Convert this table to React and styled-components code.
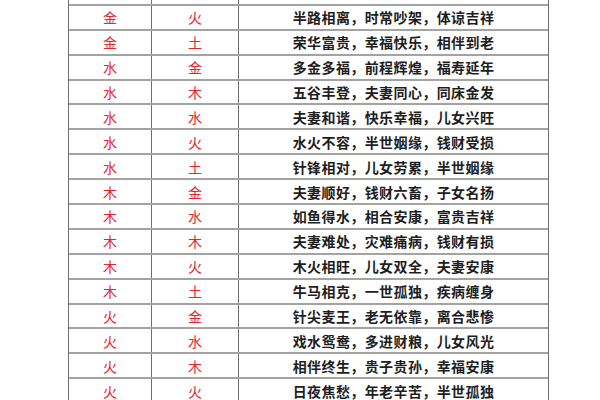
import React from 'react'
import styled, { createGlobalStyle } from 'styled-components'

const GlobalStyle = createGlobalStyle`
    html, body {
        margin: 0;
        padding: 0;
        background: #ffffff;
        overflow: hidden;
    }
`

const Page = styled.div`
    width: 600px;
    height: 400px;
    overflow: hidden;
    padding-left: 68px;
    box-sizing: border-box;
    font-family: "Noto Sans CJK SC", "Noto Sans", sans-serif;
`

const Table = styled.div`
    display: flex;
    flex-direction: column;
    width: 481px;
    margin-top: -19px;
    border-left: 1px solid #6f6f6f;
    border-right: 1px solid #6f6f6f;
    box-sizing: border-box;
`

const Row = styled.div`
    display: grid;
    grid-template-columns: 83px 87px 1fr;
    height: 24.9px;
    box-sizing: border-box;
    border-bottom: 2px solid #a3a3a3;
`

const Cell = styled.div`
    display: flex;
    align-items: center;
    justify-content: center;
    font-size: 14px;
    line-height: 1;
    color: ${props => props.$red ? '#e5262e' : '#1e1e1e'};
    font-weight: ${props => props.$red ? 400 : 600};
    letter-spacing: ${props => props.$red ? '0' : '0.4px'};
    border-right: ${props => props.$last ? 'none' : '1px solid #6f6f6f'};
`

const rows = [
    ['', '', ''],
    ['金', '火', '半路相离，时常吵架，体谅吉祥'],
    ['金', '土', '荣华富贵，幸福快乐，相伴到老'],
    ['水', '金', '多金多福，前程辉煌，福寿延年'],
    ['水', '木', '五谷丰登，夫妻同心，同床金发'],
    ['水', '水', '夫妻和谐，快乐幸福，儿女兴旺'],
    ['水', '火', '水火不容，半世姻缘，钱财受损'],
    ['水', '土', '针锋相对，儿女劳累，半世姻缘'],
    ['木', '金', '夫妻顺好，钱财六畜，子女名扬'],
    ['木', '水', '如鱼得水，相合安康，富贵吉祥'],
    ['木', '木', '夫妻难处，灾难痛病，钱财有损'],
    ['木', '火', '木火相旺，儿女双全，夫妻安康'],
    ['木', '土', '牛马相克，一世孤独，疾病缠身'],
    ['火', '金', '针尖麦王，老无依靠，离合悲惨'],
    ['火', '水', '戏水鸳鸯，多进财粮，儿女风光'],
    ['火', '木', '相伴终生，贵子贵孙，幸福安康'],
    ['火', '火', '日夜焦愁，年老辛苦，半世孤独'],
]

export default function App() {
    return (
        <>
            <GlobalStyle />
            <Page>
                <Table>
                    {rows.map((r, i) => (
                        <Row key={i}>
                            <Cell $red>{r[0]}</Cell>
                            <Cell $red>{r[1]}</Cell>
                            <Cell $last>{r[2]}</Cell>
                        </Row>
                    ))}
                </Table>
            </Page>
        </>
    )
}
